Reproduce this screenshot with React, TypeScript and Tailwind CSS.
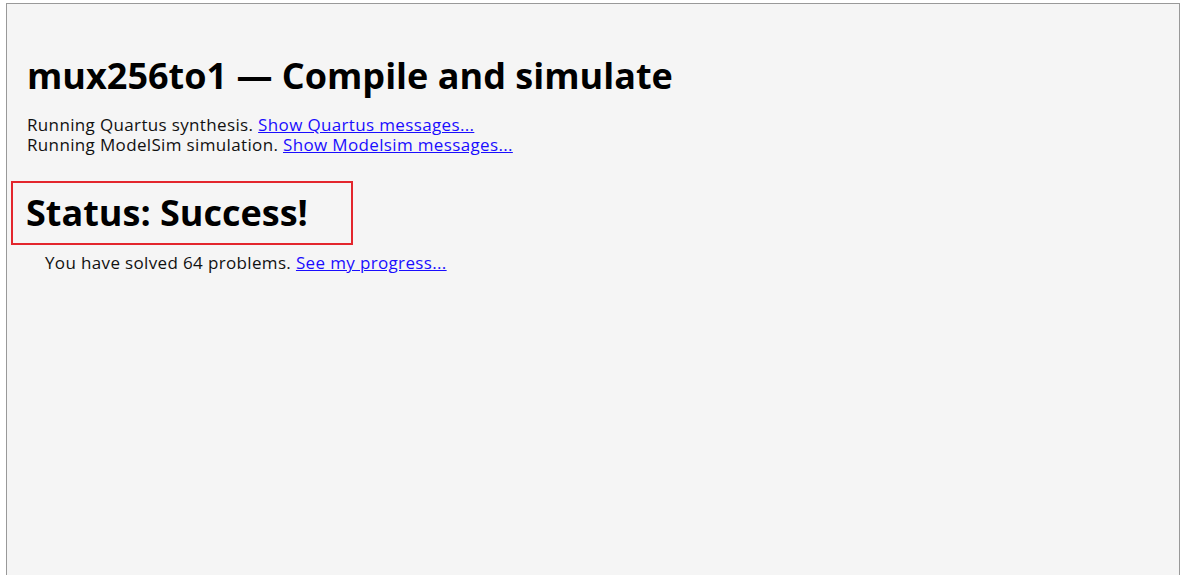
export default function App() {
  return (
    <div className="h-[575px] overflow-hidden bg-white pt-[3px] pl-[6px] pr-[3px]">
      <div className="min-h-[600px] border border-[#999] bg-[#f5f5f5] px-5 pt-[47px] text-black font-['Open_Sans',sans-serif]">
        <h1 className="text-[36px] font-bold leading-[50px]">
          mux256to1 — Compile and simulate
        </h1>
        <div className="mt-[14px] text-[17px] leading-5 tracking-[0.35px] text-[#111]">
          <div>
            Running Quartus synthesis.{' '}
            <a href="#" className="text-[#1a0dff] underline">Show Quartus messages...</a>
          </div>
          <div>
            Running ModelSim simulation.{' '}
            <a href="#" className="text-[#1a0dff] underline">Show Modelsim messages...</a>
          </div>
        </div>
        <div className="mt-[26px] -ml-[16px] flex h-[64px] w-[342px] items-center border-2 border-[#e3262d] pl-[13px]">
          <h2 className="text-[36px] font-bold leading-[50px]">
            Status: Success!
          </h2>
        </div>
        <p className="mt-[8px] pl-[18px] text-[17px] leading-5 tracking-[0.35px] text-[#111]">
          You have solved 64 problems.{' '}
          <a href="#" className="text-[#1a0dff] underline">See my progress...</a>
        </p>
      </div>
    </div>
  )
}
